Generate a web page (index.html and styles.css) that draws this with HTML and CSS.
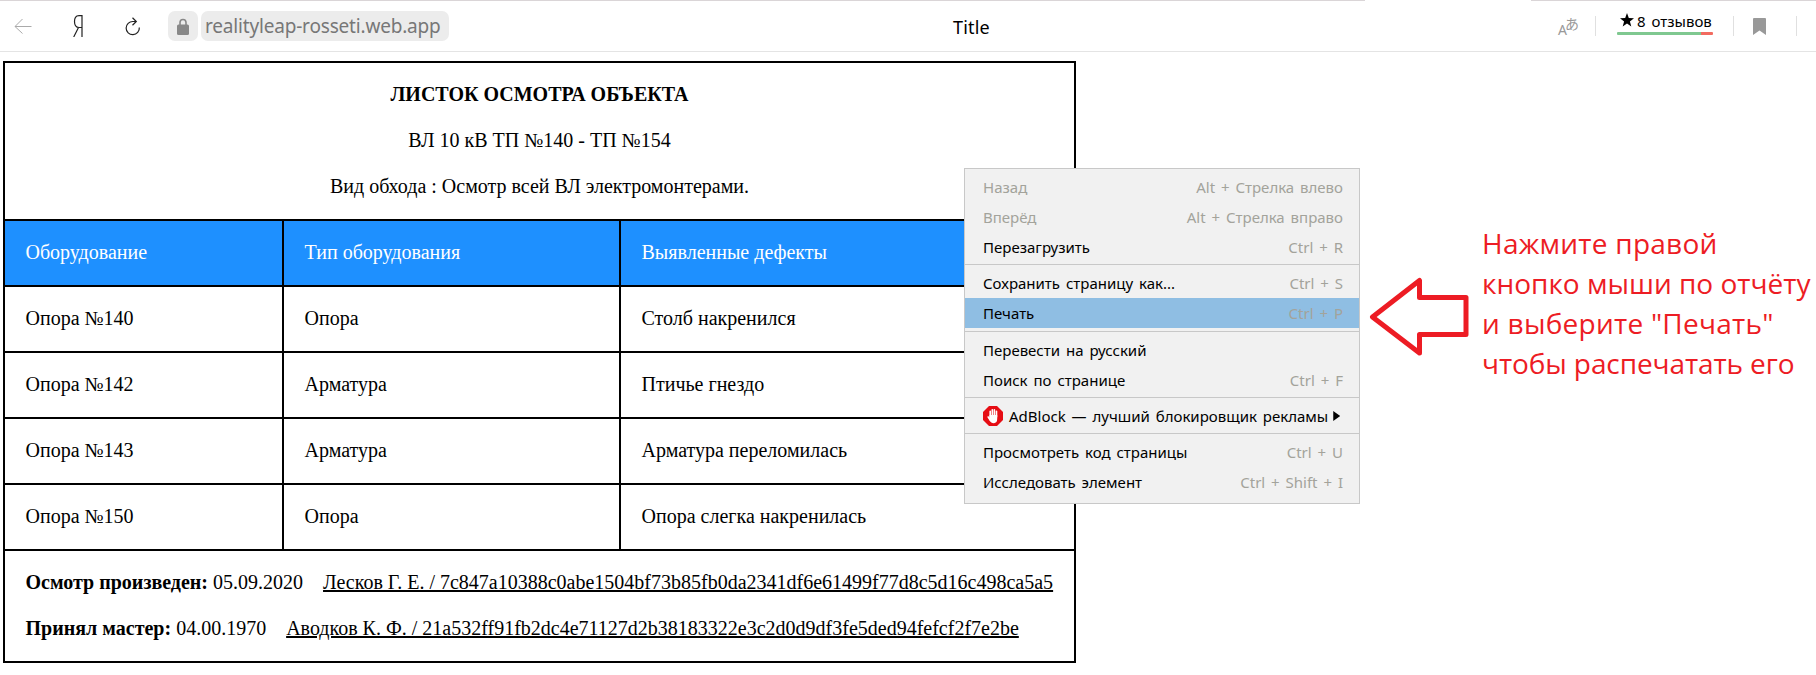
FILE: index.html
```
<!DOCTYPE html>
<html lang="ru">
<head>
<meta charset="utf-8">
<title>Title</title>
<link rel="stylesheet" href="styles.css">
</head>
<body>
<header class="toolbar">
  <div class="tab-edge"><i class="tab-line-left"></i><i class="tab-line-right"></i></div>
  <svg class="icon-back" viewBox="0 0 18 16" width="18" height="16"><path d="M17.500 8.500H1M8.500 1 1 8.500l7.500 7"/></svg>
  <svg class="icon-ya" viewBox="0 0 10 22" width="10" height="22"><path d="M9 0V22M9 .7H6C2.600 .7 1.500 3 1.500 6.500S3 12.500 6 12.500H9M5.500 12.500 .7 22"/></svg>
  <svg class="icon-reload" viewBox="0 0 16 19" width="16" height="19"><path d="M14.300 10.500A6.600 6.600 0 1 1 8 4.500H11M7.500 .8 11.300 4.500 7.500 8.200"/></svg>
  <span class="lock"><svg viewBox="0 0 12 17" width="12" height="17"><path class="shackle" d="M3 8V4.500a3 3 0 0 1 6 0V8"/><rect x="0" y="6.500" width="12" height="10.500" rx="1.500"/></svg></span>
  <span class="address">realityleap-rosseti.web.app</span>
  <span class="page-title">Title</span>
  <div class="tools">
    <span class="translate"><span class="translate-a">A</span><span class="translate-ja">あ</span></span>
    <i class="divider"></i>
    <div class="reviews">
      <div class="reviews-label"><svg viewBox="0 0 14 14" width="14" height="14"><path d="M7 0 8.800 4.900 14 5.200 9.900 8.400 11.300 13.600 7 10.600 2.700 13.600 4.100 8.400 0 5.200 5.200 4.900Z"/></svg><span>8 отзывов</span></div>
      <div class="rating"></div>
    </div>
    <i class="divider"></i>
    <svg class="icon-bookmark" viewBox="0 0 13 17" width="13" height="17"><path d="M1 0H12Q13 0 13 1V17L6.500 12.500 0 17V1Q0 0 1 0Z"/></svg>
    <i class="divider"></i>
  </div>
</header>

<main class="page">
  <table class="report">
    <colgroup><col class="col-equipment"><col class="col-type"><col class="col-defects"></colgroup>
    <tbody>
      <tr><td class="summary" colspan="3">
        <p><b>ЛИСТОК ОСМОТРА ОБЪЕКТА</b></p>
        <p>ВЛ 10 кВ ТП №140 - ТП №154</p>
        <p>Вид обхода : Осмотр всей ВЛ электромонтерами.</p>
      </td></tr>
      <tr class="head"><td>Оборудование</td><td>Тип оборудования</td><td>Выявленные дефекты</td></tr>
      <tr><td>Опора №140</td><td>Опора</td><td>Столб накренился</td></tr>
      <tr><td>Опора №142</td><td>Арматура</td><td>Птичье гнездо</td></tr>
      <tr><td>Опора №143</td><td>Арматура</td><td>Арматура переломилась</td></tr>
      <tr><td>Опора №150</td><td>Опора</td><td>Опора слегка накренилась</td></tr>
      <tr><td class="signatures" colspan="3">
        <p><b>Осмотр произведен:</b> 05.09.2020 <u>Лесков Г. Е. / 7c847a10388c0abe1504bf73b85fb0da2341df6e61499f77d8c5d16c498ca5a5</u></p>
        <p><b>Принял мастер:</b> 04.00.1970 <u>Аводков К. Ф. / 21a532ff91fb2dc4e71127d2b38183322e3c2d0d9df3fe5ded94fefcf2f7e2be</u></p>
      </td></tr>
    </tbody>
  </table>

  <ul class="menu">
    <li class="item disabled"><span>Назад</span><kbd>Alt + Стрелка влево</kbd></li>
    <li class="item disabled"><span>Вперёд</span><kbd>Alt + Стрелка вправо</kbd></li>
    <li class="item"><span>Перезагрузить</span><kbd>Ctrl + R</kbd></li>
    <li class="separator"></li>
    <li class="item"><span>Сохранить страницу как...</span><kbd>Ctrl + S</kbd></li>
    <li class="item active"><span>Печать</span><kbd>Ctrl + P</kbd></li>
    <li class="separator wide"></li>
    <li class="item"><span>Перевести на русский</span></li>
    <li class="item"><span>Поиск по странице</span><kbd>Ctrl + F</kbd></li>
    <li class="separator"></li>
    <li class="item"><svg class="icon-adblock" viewBox="0 0 20 20" width="20" height="20"><path class="sign" d="M6 0h8l6 6v8l-6 6H6l-6-6V6z"/><path class="hand" d="M7.500 14.500 5.200 11M7.200 11V5.200M9.300 10V3.700M11.400 10V3.700M13.500 11V5.200"/><path class="palm" d="M6.500 9h7.700v4q0 4-3.400 4.200Q8 17.200 6.500 14z"/></svg><span>AdBlock — лучший блокировщик рекламы</span><i class="submenu-arrow"></i></li>
    <li class="separator"></li>
    <li class="item"><span>Просмотреть код страницы</span><kbd>Ctrl + U</kbd></li>
    <li class="item"><span>Исследовать элемент</span><kbd>Ctrl + Shift + I</kbd></li>
  </ul>

  <svg class="arrow" viewBox="0 0 100 80" width="100" height="80"><path d="M3.500 40 50.500 3.500V20.500H97V57.500H50.500V76Z"/></svg>
  <div class="note"><div class="loose">Нажмите правой</div><div>кнопко мыши по отчёту</div><div class="loose">и выберите "Печать"</div><div class="tight">чтобы распечатать его</div></div>
</main>
</body>
</html>
```
FILE: styles.css
```
* { box-sizing: border-box; }
body { margin: 0; background: #fff; color: #000; overflow: hidden; }
p { margin: 0; }
svg { display: block; flex: none; }

.toolbar { position: relative; display: flex; align-items: flex-start; height: 52px; border-bottom: 1px solid #e4e4e4; font-family: "Noto Sans", sans-serif; }
.tab-edge { position: absolute; inset: 0 0 auto; display: flex; justify-content: space-between; height: 1px; }
.tab-line-left { width: 1365px; background: #dad5d7; }
.tab-line-right { width: 285px; background: #dad5d7; }
.icon-back { margin: 18px 0 0 14px; fill: none; stroke: #aaa; }
.icon-ya { margin: 15px 0 0 41px; fill: none; stroke: #222; stroke-width: 1.200; }
.icon-reload { margin: 17px 0 0 42px; fill: none; stroke: #222; stroke-width: 1.200; }
.lock { display: flex; justify-content: center; align-items: center; width: 30px; height: 30px; margin: 11px 0 0 27px; border-radius: 7px; background: #ececec; }
.lock svg { fill: #888; }
.lock .shackle { fill: none; stroke: #888; stroke-width: 1.600; }
.address { width: 248px; height: 30px; margin: 11px 0 0 3px; padding-left: 4px; border-radius: 7px; background: #ececec; color: #777; font-size: 19px; line-height: 31px; letter-spacing: -.18px; white-space: nowrap; }
.page-title { margin: 12px 0 0 504px; font-size: 18px; line-height: 30px; letter-spacing: .2px; }
.tools { display: flex; margin-left: auto; }
.divider { width: 1px; height: 20px; margin-top: 16px; background: #e0e0e0; }
.translate { position: relative; width: 20px; height: 20px; margin: 16px 17px 0 0; color: #999; }
.translate-a { position: absolute; left: 0; top: 4px; font-size: 14px; line-height: 20px; }
.translate-ja { position: absolute; left: 7px; top: -3px; font: 14px/20px "Noto Sans CJK JP", sans-serif; }
.reviews { width: 96px; margin: 10px 20px 0 21px; }
.reviews-label { display: flex; gap: 3px; padding-left: 3px; height: 22px; font-size: 15px; line-height: 22px; word-spacing: 2px; white-space: nowrap; }
.reviews-label svg { margin-top: 3px; }
.rating { height: 3px; border-radius: 1px; background: linear-gradient(to right, #7fc890 84px, #f26b60 84px); }
.icon-bookmark { margin: 18px 30px 0 19px; fill: #999; }
.tools .divider:last-child { margin-right: 19px; }

.page { position: relative; height: 623px; padding: 9px 0 0 3px; }
.report { width: 1073px; table-layout: fixed; border-collapse: collapse; font: 20px/23px "Liberation Serif", serif; }
.report td { height: 66px; padding: 0 20.500px 1px; border: 2px solid #000; white-space: nowrap; }
.col-equipment { width: 279px; }
.col-type { width: 337px; }
.report .summary { height: 158px; text-align: center; }
.summary p + p, .signatures p + p { margin-top: 23px; }
.head { background: #1e90ff; color: #fff; }
.report .signatures { height: 112px; }
.signatures u { margin-left: 15px; text-decoration-thickness: 2px; }

.menu { position: absolute; left: 964px; top: 116px; width: 396px; height: 336px; margin: 0; padding: 3px 0 0; border: 1px solid #c8c8c8; background: #f1f1f1; list-style: none; font: 15px/30px "Noto Sans", sans-serif; word-spacing: 2px; }
.item { display: flex; height: 30px; padding: 0 16px 0 18px; white-space: nowrap; }
.item kbd { margin-left: auto; color: #a3a39b; font: inherit; }
.disabled { color: #a3a39b; }
.active { background: #8fbee3; }
.separator { height: 6px; padding-top: 2px; }
.separator.wide { height: 7px; padding-top: 3px; }
.separator::before { content: ""; display: block; height: 1px; background: #c8c8c8; }
.icon-adblock { margin: 5px 6px 0 0; }
.sign { fill: #e60d14; }
.hand { fill: none; stroke: #fff; stroke-width: 1.600; stroke-linecap: round; }
.palm { fill: #fff; }
.submenu-arrow { width: 7px; height: 10px; margin: 10px 0 0 5px; background: #000; clip-path: polygon(0 0, 100% 50%, 0 100%); }

.arrow { position: absolute; left: 1369px; top: 225px; fill: none; stroke: #ed1c24; stroke-width: 5; stroke-linejoin: round; }
.note { position: absolute; left: 1482px; top: 171px; color: #ed1c24; font: 28px/40px "Open Sans", sans-serif; white-space: nowrap; }
.loose { letter-spacing: .25px; }
.tight { letter-spacing: -.1px; }
```
